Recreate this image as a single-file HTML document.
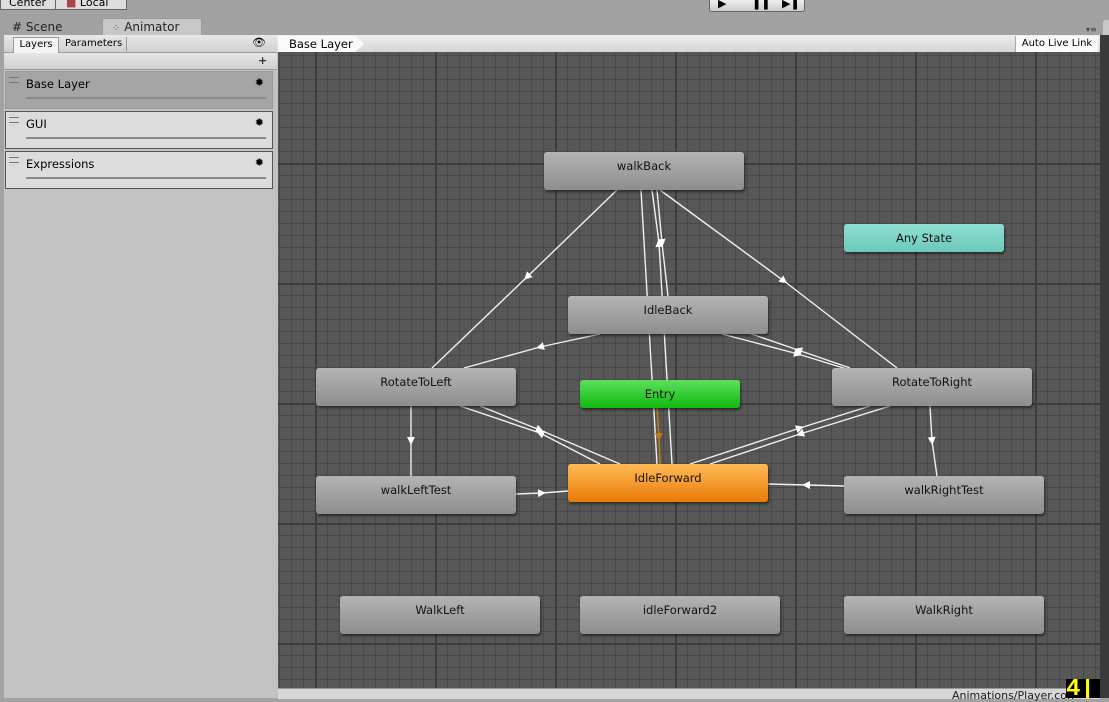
<!DOCTYPE html><html><head><style>
body{margin:0;width:1109px;height:698px;overflow:hidden;background:#a2a2a2;font-family:"DejaVu Sans","Liberation Sans",sans-serif;font-size:11px;position:relative}
.a{position:absolute}
.node{position:absolute;border-radius:3px;background:linear-gradient(#b4b4b4,#8e8e8e);box-shadow:1px 2px 2px rgba(0,0,0,.5);text-align:center;color:#111;font-size:11.5px;padding-top:7px;box-sizing:border-box}
.grid{left:278px;top:52px;width:822px;height:636px;background-color:#575757;
background-image:linear-gradient(90deg,#3c3c3c 2px,transparent 2px),linear-gradient(#3c3c3c 2px,transparent 2px),linear-gradient(90deg,#494949 1px,transparent 1px),linear-gradient(#494949 1px,transparent 1px);
background-size:120px 120px,120px 120px,12px 12px,12px 12px;background-position:37px 111px,37px 111px,1px 3px,1px 3px}
.layer{position:absolute;left:5px;width:268px;height:38px;background:#dcdcdc;border:1px solid #555;box-sizing:border-box}
.layer .t{position:absolute;left:20px;top:5px;font-size:11.5px}
.layer .h{position:absolute;left:3px;top:5px;width:10px;height:4px;border-top:1px solid #777;border-bottom:1px solid #777}
.layer .g{position:absolute;right:8px;top:4px;font-size:11px}
.layer .u{position:absolute;left:20px;right:6px;top:25px;height:2px;background:#888}
</style></head><body>
<div class="a" style="left:0;top:0;width:48px;height:9px;background:#ddd;border:1px solid #666;border-top:none;font-size:11px;line-height:6px;padding-left:8px;overflow:hidden">Center</div>
<div class="a" style="left:55px;top:0;width:60px;height:9px;background:#ddd;border:1px solid #666;border-top:none;line-height:6px;padding-left:10px;overflow:hidden"><span style="color:#a44">■</span> Local</div>
<div class="a" style="left:709px;top:0;width:94px;height:11px;background:linear-gradient(#eee,#ccc);border:1px solid #666;border-top:none;border-radius:0 0 3px 3px;font-size:11px;line-height:8px;overflow:hidden"><span style="position:absolute;left:8px">▶</span><span style="position:absolute;left:42px;font-weight:bold">❚❚</span><span style="position:absolute;left:72px">▶❚</span></div>
<div class="a" style="left:12px;top:20px;color:#222;font-size:12px"># Scene</div>
<div class="a" style="left:102px;top:18px;width:98px;height:18px;background:#c8c8c8;border-radius:3px 3px 0 0;border:1px solid #999;border-bottom:none"></div>
<div class="a" style="left:112px;top:20px;color:#222;font-size:12px"><span style="font-size:10px;color:#555">⁘</span> Animator</div>
<div class="a" style="left:1086px;top:25px;font-size:8px;color:#444">▾≡</div>
<div class="a" style="left:4px;top:35px;width:1096px;height:663px;background:#c2c2c2"></div>
<div class="a" style="left:4px;top:35px;width:273px;height:17px;background:linear-gradient(#e8e8e8,#d0d0d0);border-bottom:1px solid #999"></div>
<div class="a" style="left:13px;top:37px;width:44px;height:15px;background:#f4f4f4;border:1px solid #999;border-bottom:none;font-size:10px;text-align:center;line-height:14px">Layers</div>
<div class="a" style="left:61px;top:37px;font-size:10px;line-height:14px;padding:0 4px;border-right:1px solid #999">Parameters</div>
<div class="a" style="left:252px;top:36px;font-size:11px">👁</div>
<div class="a" style="left:4px;top:53px;width:273px;height:16px;background:linear-gradient(#e6e6e6,#cfcfcf);border-bottom:1px solid #999"></div>
<div class="a" style="left:258px;top:54px;font-weight:bold;font-size:11px;color:#333">+</div>
<div class="layer" style="top:71px;background:#a5a5a5;border-color:#999"><div class="h"></div><div class="t">Base Layer</div><div class="g">✹</div><div class="u" style="background:#8a8a8a"></div></div>
<div class="layer" style="top:111px"><div class="h"></div><div class="t">GUI</div><div class="g">✹</div><div class="u"></div></div>
<div class="layer" style="top:151px"><div class="h"></div><div class="t">Expressions</div><div class="g">✹</div><div class="u"></div></div>
<div class="a" style="left:277px;top:35px;width:823px;height:17px;background:linear-gradient(#efefef,#d4d4d4)"></div>
<div class="a" style="left:278px;top:36px;width:86px;height:16px;background:#fafafa;font-size:11.5px;line-height:16px;padding-left:11px;box-sizing:border-box;clip-path:polygon(0 0,90% 0,100% 50%,90% 100%,0 100%)">Base Layer</div>
<div class="a" style="left:1015px;top:36px;width:82px;height:16px;background:#fafafa;border-left:1px solid #aaa;font-size:10px;line-height:16px;text-align:center">Auto Live Link</div>
<div class="a grid"></div>
<svg class="a" style="left:0;top:0" width="1109" height="698">
<defs><marker id="m" viewBox="0 0 10 10" refX="5" refY="5" markerWidth="8" markerHeight="8" markerUnits="userSpaceOnUse" orient="auto"><path d="M0 0L10 5L0 10z" fill="#fff"/></marker>
<marker id="o" viewBox="0 0 10 10" refX="5" refY="5" markerWidth="8" markerHeight="8" markerUnits="userSpaceOnUse" orient="auto"><path d="M0 0L10 5L0 10z" fill="#c07a10"/></marker></defs>
<g stroke="#f0f0f0" stroke-width="1.4" fill="none" marker-mid="url(#m)">
<path d="M617 190L527 277L432 368"/>
<path d="M660 190L784 281L897 368"/>
<path d="M641 190L649 327L657 464"/>
<path d="M672 464L659 243L652 190" />
<path d="M657 190L662 243L668 296"/>
<path d="M600 334L540 347L464 368"/>
<path d="M722 334L798 354L850 370"/>
<path d="M850 368L798 350L740 330"/>
<path d="M600 464L540 433L460 406"/>
<path d="M480 406L540 430L620 464"/>
<path d="M690 464L800 428L870 406"/>
<path d="M890 406L800 434L710 464"/>
<path d="M411 406L411 441L411 476"/>
<path d="M930 406L932 441L937 476"/>
<path d="M516 494L542 493L568 491"/>
<path d="M844 486L806 485L768 484"/>
</g>
<path d="M657 408L659 437L660 464" stroke="#c07a10" stroke-width="1.5" fill="none" marker-mid="url(#o)"/>
</svg>
<div class="node" style="left:544px;top:152px;width:200px;height:38px">walkBack</div>
<div class="node" style="left:844px;top:224px;width:160px;height:28px;background:linear-gradient(#8fe0d2,#6cc9b9);padding-top:7px">Any State</div>
<div class="node" style="left:568px;top:296px;width:200px;height:38px">IdleBack</div>
<div class="node" style="left:316px;top:368px;width:200px;height:38px">RotateToLeft</div>
<div class="node" style="left:832px;top:368px;width:200px;height:38px">RotateToRight</div>
<div class="node" style="left:580px;top:380px;width:160px;height:28px;background:linear-gradient(#5ee05e,#0eb80e);padding-top:7px">Entry</div>
<div class="node" style="left:568px;top:464px;width:200px;height:38px;background:linear-gradient(#ffbb55,#ea7a08);padding-top:7px">IdleForward</div>
<div class="node" style="left:316px;top:476px;width:200px;height:38px">walkLeftTest</div>
<div class="node" style="left:844px;top:476px;width:200px;height:38px">walkRightTest</div>
<div class="node" style="left:340px;top:596px;width:200px;height:38px">WalkLeft</div>
<div class="node" style="left:580px;top:596px;width:200px;height:38px">idleForward2</div>
<div class="node" style="left:844px;top:596px;width:200px;height:38px">WalkRight</div>
<div class="a" style="left:278px;top:688px;width:822px;height:10px;background:#d6d6d6;border-top:1px solid #999"></div>
<div class="a" style="left:952px;top:690px;font-size:11px;line-height:12px;color:#222">Animations/Player.con</div>
<div class="a" style="left:1066px;top:679px;width:34px;height:19px;background:#000;color:#ff0;font:bold 24px 'Liberation Mono',monospace;line-height:22px;overflow:hidden">4|</div>
<div class="a" style="left:1100px;top:35px;width:9px;height:663px;background:#3a3a3a"></div>
<div class="a" style="left:1103px;top:20px;width:6px;height:15px;background:#c8c8c8;border-radius:3px 0 0 0"></div>
</body></html>
